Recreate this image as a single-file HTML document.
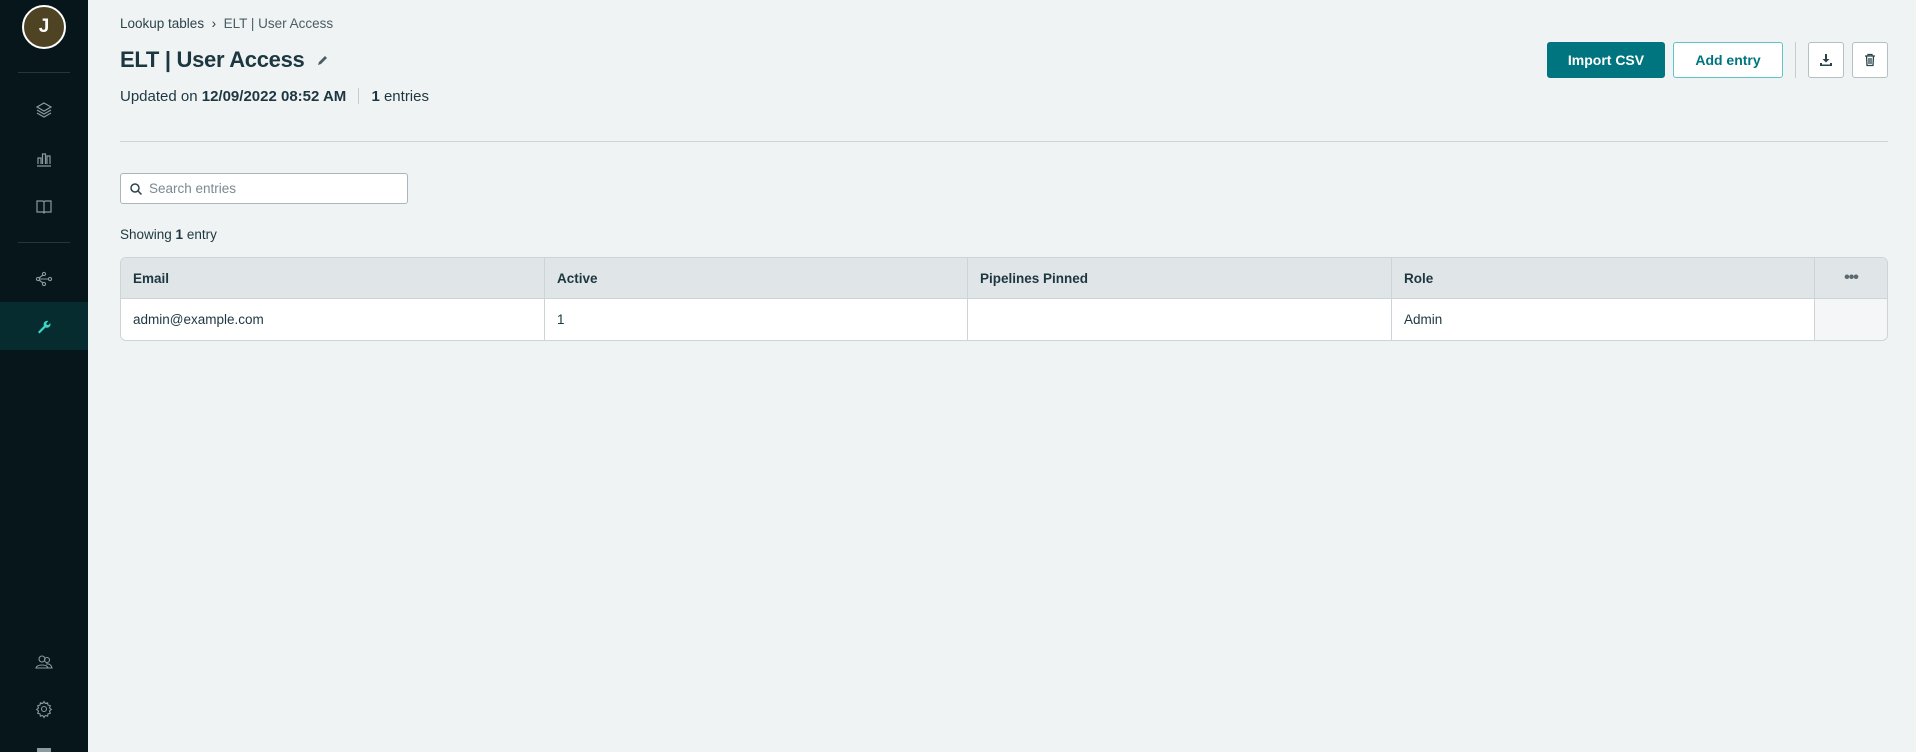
<!DOCTYPE html>
<html><head><style>
*{box-sizing:border-box;margin:0;padding:0}
body{width:1916px;height:752px;background:#f0f3f4;font-family:"Liberation Sans",sans-serif;color:#1d3740;position:relative;overflow:hidden}
.sb{position:absolute;left:0;top:0;width:88px;height:752px;background:#06161b}
.av{position:absolute;left:22px;top:4px;width:44px;height:44px;border-radius:50%;background:#4e4424;border:2px solid #fff;color:#fff;font-weight:bold;font-size:19px;text-align:center;line-height:40px}
.dv{position:absolute;left:18px;width:52px;height:1px;background:#26363b}
.ic{position:absolute;left:34px;width:20px;height:20px}
.act{position:absolute;left:0;top:302px;width:88px;height:48px;background:#062c30}
.abs{position:absolute;white-space:nowrap}
.btn{position:absolute;top:42px;height:36px;border-radius:3px;font-weight:bold;font-size:14px;text-align:center;line-height:34px}
table{position:absolute;left:120px;top:257px;width:1768px;border-collapse:separate;border-spacing:0;border:1px solid #cdd4d8;border-radius:6px;overflow:hidden;font-size:13.5px}
td,th{height:41px;padding:0 12px;text-align:left;border-right:1px solid #cdd4d8}
th{background:#e0e5e8;font-weight:bold;border-bottom:1px solid #cdd4d8}
td{background:#fff}
tr>*:last-child{border-right:none}
</style></head><body>
<div class="sb">
<div class="av" style="top:5px">J</div>
<div class="dv" style="top:72px"></div>
<svg class="ic" style="top:100px" viewBox="0 0 20 20" fill="none" stroke="#8a9aa0" stroke-width="1.2"><path d="M10 3l7 4-7 4-7-4z"/><path d="M3 10l7 4 7-4M3 13l7 4 7-4"/></svg>
<svg class="ic" style="top:148px" viewBox="0 0 20 20" fill="none" stroke="#8a9aa0" stroke-width="1.2"><path d="M4 16V10h3v6M8.5 16V6h3v10M13 16V8h3v8M3 18h14"/></svg>
<svg class="ic" style="top:196px" viewBox="0 0 20 20" fill="none" stroke="#8a9aa0" stroke-width="1.2"><path d="M3 5h6l1 1 1-1h6v11h-6l-1 1-1-1H3zM10 6v11"/></svg>
<div class="dv" style="top:242px"></div>
<svg class="ic" style="top:269px" viewBox="0 0 20 20" fill="none" stroke="#8a9aa0" stroke-width="1.1"><circle cx="10" cy="5" r="1.6"/><circle cx="4" cy="10" r="1.6"/><circle cx="10" cy="15" r="1.6"/><circle cx="16" cy="10" r="1.6"/><path d="M5.6 10h8.8M9 6l-4 3M9 14l-4-3"/></svg>
<div class="act"></div>
<svg class="ic" style="top:316px" viewBox="0 0 20 20" fill="#3ad6c8"><path d="M4 16l1.5 1.5 6-6c1.8.6 3.8 0 4.6-1.6.5-1 .5-2 .2-2.8l-2 2-1.6-.4-.4-1.6 2-2c-.9-.3-2-.3-2.9.2-1.5.8-2.1 2.8-1.5 4.6z"/></svg>
<svg class="ic" style="top:652px" viewBox="0 0 20 20" fill="none" stroke="#8a9aa0" stroke-width="1.1"><circle cx="8" cy="7" r="3"/><circle cx="13" cy="8" r="2.5"/><path d="M2 16c1-4 11-4 12 0zM12 12c2-.5 5 0 6 4h-4"/></svg>
<svg class="ic" style="top:699px" viewBox="0 0 20 20" fill="none" stroke="#8a9aa0" stroke-width="1.1"><circle cx="10" cy="10" r="2.5"/><path d="M10 2.5l1.3 2 2.3-.7.4 2.3 2.3.6-.8 2.3 1.8 1.5-1.8 1.5.8 2.3-2.3.6-.4 2.3-2.3-.7-1.3 2-1.3-2-2.3.7-.4-2.3-2.3-.6.8-2.3-1.8-1.5 1.8-1.5-.8-2.3 2.3-.6.4-2.3 2.3.7z"/></svg>
<div style="position:absolute;left:37px;top:748px;width:14px;height:4px;background:#8a9aa0"></div>
</div>

<div class="abs" style="left:120px;top:16px;font-size:13.5px;color:#2b444c">Lookup tables &nbsp;›&nbsp; <span style="color:#4a5e65">ELT | User Access</span></div>
<div class="abs" style="left:120px;top:47px;font-size:22px;font-weight:bold;letter-spacing:-0.3px">ELT | User Access <svg width="14" height="14" viewBox="0 0 14 14" style="margin-left:6px"><path d="M2 12l1-3 6-6 2 2-6 6z" fill="#4a5e65"/></svg></div>
<div class="abs" style="left:120px;top:88px;font-size:15px">Updated on <b>12/09/2022 08:52 AM</b> <span style="display:inline-block;width:1px;height:16px;background:#c5cdd1;margin:0 12px -3px 8px"></span><b>1</b> entries</div>
<div style="position:absolute;left:120px;top:141px;width:1768px;height:1px;background:#cdd4d8"></div>

<div class="btn" style="left:1547px;width:118px;background:#00757f;color:#fff;border:1px solid #00757f">Import CSV</div>
<div class="btn" style="left:1673px;width:110px;background:#fff;color:#00757f;border:1px solid #5ec4c8">Add entry</div>
<div style="position:absolute;left:1795px;top:42px;width:1px;height:36px;background:#c5cdd1"></div>
<div class="btn" style="left:1808px;width:36px;background:#fff;border:1px solid #b5c0c6"><svg width="14" height="14" viewBox="0 0 14 14" style="margin-top:10px"><path d="M6 1h2v5h2.5L7 9.5 3.5 6H6zM1 10h2v1.5h8V10h2v3H1z" fill="#2b444c"/></svg></div>
<div class="btn" style="left:1852px;width:36px;background:#fff;border:1px solid #b5c0c6"><svg width="14" height="14" viewBox="0 0 14 14" style="margin-top:10px" fill="none" stroke="#2b444c" stroke-width="1.3"><path d="M2 3h10M5 3V1.5h4V3M3.5 3l.5 9.5h6l.5-9.5M6 5v6M8 5v6"/></svg></div>

<div style="position:absolute;left:120px;top:173px;width:288px;height:31px;background:#fff;border:1px solid #aab6bc;border-radius:3px"><svg width="14" height="14" viewBox="0 0 14 14" style="position:absolute;left:8px;top:8px" fill="none" stroke="#2b444c" stroke-width="1.5"><circle cx="6" cy="6" r="4"/><path d="M9 9l3.5 3.5"/></svg><span class="abs" style="left:28px;top:7px;font-size:13.5px;color:#7a8a90">Search entries</span></div>
<div class="abs" style="left:120px;top:227px;font-size:13.5px">Showing <b>1</b> entry</div>

<table>
<tr><th style="width:424px">Email</th><th style="width:423px">Active</th><th style="width:424px">Pipelines Pinned</th><th style="width:423px">Role</th><th style="text-align:center;color:#5a6a70;font-size:16px;letter-spacing:-1px">•••</th></tr>
<tr><td>admin@example.com</td><td>1</td><td></td><td>Admin</td><td style="background:#f4f6f7"></td></tr>
</table>
</body></html>
